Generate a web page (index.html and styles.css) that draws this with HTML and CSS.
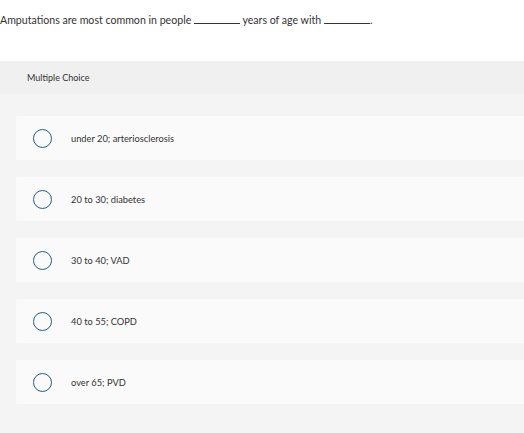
FILE: index.html
```html
<!DOCTYPE html>
<html>
<head>
<meta charset="utf-8">
<link rel="stylesheet" href="styles.css">
</head>
<body>
<p class="question">Amputations are most common in people <span class="blank"></span> years of age with <span class="blank"></span>.</p>
<section class="mc">
  <div class="mc-head">Multiple Choice</div>
  <div class="choices">
    <div class="choice"><span class="radio"></span><span class="label">under 20; arteriosclerosis</span></div>
    <div class="choice"><span class="radio"></span><span class="label">20 to 30; diabetes</span></div>
    <div class="choice"><span class="radio"></span><span class="label">30 to 40; VAD</span></div>
    <div class="choice"><span class="radio"></span><span class="label">40 to 55; COPD</span></div>
    <div class="choice"><span class="radio"></span><span class="label">over 65; PVD</span></div>
  </div>
</section>
</body>
</html>
```
FILE: styles.css
```css
html, body {
  margin: 0;
  padding: 0;
  background: #ffffff;
  font-family: Lato, "Open Sans", Arial, sans-serif;
  color: #333333;
}
.question {
  margin: 0;
  height: 61px;
  box-sizing: border-box;
  padding-top: 13px;
  font-size: 10.6px;
  line-height: 14px;
}
.blank {
  display: inline-block;
  width: 46px;
  border-bottom: 1px solid #333333;
  vertical-align: baseline;
}
.mc {
  background: #f4f4f4;
  height: 372px;
}
.mc-head {
  background: #f0f0f0;
  height: 33px;
  display: flex;
  align-items: center;
  padding-left: 27px;
  font-size: 9px;
  color: #333333;
}
.choices {
  display: flex;
  flex-direction: column;
  gap: 17px;
  padding-top: 22px;
  padding-left: 16px;
}
.choice {
  background: #fafafa;
  height: 44px;
  display: flex;
  align-items: center;
  padding-left: 17px;
  border-radius: 2px 0 0 2px;
}
.radio {
  width: 17px;
  height: 17px;
  border: 1.5px solid #245a92;
  border-radius: 50%;
  flex: none;
  margin-right: 19px;
}
.label {
  font-size: 9.3px;
  color: #333333;
}
```
